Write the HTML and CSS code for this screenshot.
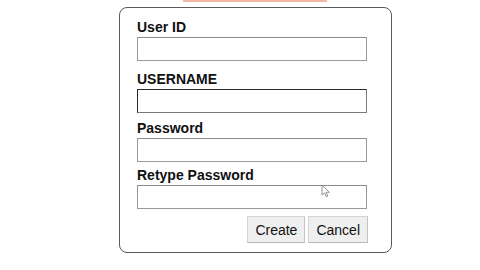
FILE: index.html
```html
<!DOCTYPE html>
<html lang="en">
<head>
    <meta charset="UTF-8">
    <meta name="viewport" content="width=device-width, initial-scale=1.0">
    <title>Create User</title>
    <link rel="stylesheet" href="styles.css">
</head>
<body>
    <div class="top-strip"></div>

    <!-- Create user dialog -->
    <div class="dialog">
        <form id="createForm" class="user-form">
            <div class="field">
                <label for="userId" class="field-label">User ID</label>
                <input type="text" id="userId" class="field-input">
            </div>

            <div class="field">
                <label for="username" class="field-label">USERNAME</label>
                <input type="text" id="username" class="field-input active">
            </div>

            <div class="field">
                <label for="password" class="field-label">Password</label>
                <input type="password" id="password" class="field-input">
            </div>

            <div class="field">
                <label for="retype" class="field-label">Retype Password</label>
                <input type="password" id="retype" class="field-input">
            </div>

            <div class="actions">
                <button type="submit">Create</button>
                <button type="button">Cancel</button>
            </div>
        </form>

        <!-- mouse pointer over the last field -->
        <svg class="pointer" width="10" height="14" viewBox="0 0 10 14">
            <path d="M1 1 L1 11 L3.5 8.8 L5.3 12.8 L6.8 12.1 L5.1 8.3 L8.4 8.3 Z" fill="#fff" stroke="#888" stroke-width="0.9" stroke-linejoin="round"/>
        </svg>
    </div>
</body>
</html>
```

FILE: styles.css
```css
/* General Styles */
body {
    font-family: "Liberation Sans", Arial, sans-serif;
    margin: 0;
    padding: 0;
    background-color: #fff;
    color: #111;
}

/* Strip of the element above the dialog */
.top-strip {
    margin-left: 183px;
    width: 144px;
    height: 2px;
    background-color: #f5b7a4;
}

/* Dialog box */
.dialog {
    position: relative;
    margin: 5px 0 0 119px;
    width: 271px;
    height: 244px;
    border: 1px solid #5a5a5a;
    border-radius: 8px;
}

/* Form Layout */
.user-form {
    display: flex;
    flex-direction: column;
    padding: 11px 24px 0 17px;
}

.field {
    display: flex;
    flex-direction: column;
    margin-bottom: 10px;
}

.field:nth-child(2) {
    margin-bottom: 7px;
}

.field:nth-child(3) {
    margin-bottom: 5px;
}

.field:nth-child(4) {
    margin-bottom: 7px;
}

.field-label {
    font-size: 14px;
    font-weight: bold;
    line-height: 16px;
    margin-bottom: 2px;
}

.field-input {
    box-sizing: border-box;
    height: 24px;
    margin: 0;
    padding: 2px 4px;
    border: 1px solid #9a9a9a;
    border-top-color: #8a8a8a;
    background-color: #fff;
    font-size: 13px;
}

.field-input.active {
    border-color: #2a2a2a;
    border-right-color: #7a7a7a;
    border-bottom-color: #7a7a7a;
}

.field-input:focus {
    outline: none;
}

.actions {
    display: flex;
    justify-content: flex-end;
    gap: 3px;
    margin-right: -1px;
}

button {
    height: 27px;
    padding: 0 7px;
    font-family: "Liberation Sans", Arial, sans-serif;
    font-size: 14px;
    color: #111;
    background-color: #efefef;
    border: 1px solid #d4d4d4;
    border-bottom-color: #b8b8b8;
    border-right-color: #c4c4c4;
    border-radius: 0;
    cursor: pointer;
}

button:hover {
    background-color: #e5e5e5;
}

/* Mouse pointer */
.pointer {
    position: absolute;
    left: 201px;
    top: 176px;
}
```
